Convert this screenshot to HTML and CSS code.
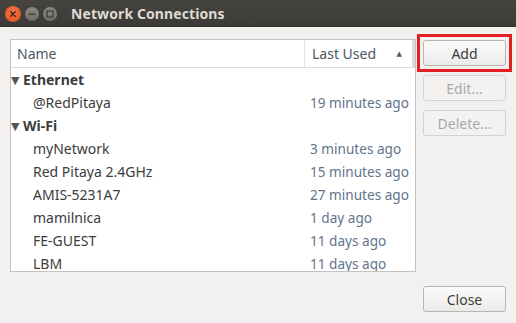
FILE: index.html
```html
<!DOCTYPE html>
<html lang="en">
<head>
    <meta charset="UTF-8">
    <title>Network Connections</title>
    <link rel="stylesheet" href="styles.css">
</head>
<body>

<div class="window">
    <div class="titlebar">
        <div class="controls">
            <span class="ctl close">
                <svg width="16" height="16" viewBox="0 0 16 16"><path d="M5.8 5.8 L10.2 10.2 M10.2 5.8 L5.8 10.2" stroke="#3a1a10" stroke-width="1.3" stroke-linecap="round"/></svg>
            </span>
            <span class="ctl small">
                <svg width="14" height="14" viewBox="0 0 14 14"><path d="M3.5 7 H10.5" stroke="#3c3b37" stroke-width="1.3"/></svg>
            </span>
            <span class="ctl small">
                <svg width="14" height="14" viewBox="0 0 14 14"><rect x="4" y="4" width="6" height="6" fill="none" stroke="#3c3b37" stroke-width="1.2"/></svg>
            </span>
        </div>
        <div class="title">Network Connections</div>
    </div>

    <div class="content">
        <div class="main">
            <div class="list">
                <div class="list-header">
                    <div class="col-name">Name</div>
                    <div class="col-used">Last Used <span class="sort">&#9650;</span></div>
                </div>
                <div class="rows">
                    <div class="row group"><span class="expander">&#9660;</span>Ethernet</div>
                    <div class="row"><span class="name">@RedPitaya</span><span class="used">19 minutes ago</span></div>
                    <div class="row group"><span class="expander">&#9660;</span>Wi-Fi</div>
                    <div class="row"><span class="name">myNetwork</span><span class="used">3 minutes ago</span></div>
                    <div class="row"><span class="name">Red Pitaya 2.4GHz</span><span class="used">15 minutes ago</span></div>
                    <div class="row"><span class="name">AMIS-5231A7</span><span class="used">27 minutes ago</span></div>
                    <div class="row"><span class="name">mamilnica</span><span class="used">1 day ago</span></div>
                    <div class="row"><span class="name">FE-GUEST</span><span class="used">11 days ago</span></div>
                    <div class="row"><span class="name">LBM</span><span class="used">11 days ago</span></div>
                </div>
            </div>

            <div class="actions">
                <div class="highlight">
                    <button class="button">Add</button>
                </div>
                <button class="button" disabled>Edit...</button>
                <button class="button" disabled>Delete...</button>
            </div>
        </div>

        <div class="footer">
            <button class="button">Close</button>
        </div>
    </div>
</div>

</body>
</html>
```

FILE: styles.css
```css
html, body {
    margin: 0;
    padding: 0;
}

body {
    width: 516px;
    height: 323px;
    overflow: hidden;
    font-family: "Noto Sans", "DejaVu Sans", sans-serif;
    font-size: 14px;
    background-color: #f2f1f0;
}

.window {
    display: flex;
    flex-direction: column;
    height: 100%;
}

.titlebar {
    height: 27px;
    flex: none;
    display: flex;
    align-items: center;
    background: linear-gradient(#45443f, #3b3a36);
    box-shadow: inset 0 -1px 0 #2e2d2a;
}

.controls {
    display: flex;
    align-items: center;
    gap: 4px;
    margin-left: 5px;
}

.ctl {
    width: 16px;
    height: 16px;
    border-radius: 50%;
    background: linear-gradient(#8a8984, #6f6e6a);
    display: flex;
}

.ctl.small {
    width: 14px;
    height: 14px;
}

.ctl.close {
    background: radial-gradient(circle at 50% 40%, #f5794d, #de4a16);
}

.title {
    margin-left: 14px;
    color: #dfdbd2;
    font-weight: bold;
    font-size: 14px;
    letter-spacing: 0.1px;
}

.content {
    flex: 1;
    display: flex;
    flex-direction: column;
    padding: 12px 10px 11px 10px;
}

.main {
    display: flex;
    height: 233px;
}

.list {
    width: 404px;
    border: 1px solid #c4c3c0;
    background: #fff;
    overflow: hidden;
    display: flex;
    flex-direction: column;
}

.list-header {
    height: 27px;
    flex: none;
    display: flex;
    align-items: center;
    border-bottom: 1px solid #dcdcdc;
    color: #4c5866;
}

.col-name {
    width: 287px;
    padding-left: 6px;
    align-self: stretch;
    display: flex;
    align-items: center;
    border-right: 1px solid #e2e2e2;
}

.col-used {
    flex: 1;
    padding-left: 7px;
    display: flex;
    align-items: center;
    border-right: 3px solid #dadada;
    align-self: stretch;
}

.sort {
    font-size: 7px;
    color: #555;
    margin-left: auto;
    margin-right: 10px;
}

.row {
    height: 23px;
    display: flex;
    align-items: center;
    color: #3c3c3c;
}

.row.group {
    font-weight: bold;
}

.expander {
    font-size: 11px;
    color: #555;
    width: 12px;
}

.name {
    width: 277px;
    padding-left: 22px;
}

.used {
    color: #61748c;
    font-size: 13.6px;
}

.actions {
    display: flex;
    flex-direction: column;
    gap: 9px;
    margin-left: 7px;
    padding-top: 1px;
}

.highlight {
    border: 3px solid #e31e24;
    padding: 3px;
    margin: -6px;
    display: flex;
}

.button {
    width: 83px;
    height: 26px;
    font-family: inherit;
    font-size: 14px;
    color: #3c3c3c;
    background: linear-gradient(#fbfbfa, #ecebe9);
    border: 1px solid #b6b5b2;
    border-radius: 3px;
    padding: 0;
}

.button:disabled {
    color: #a9a9a9;
    background: #f3f2f1;
    border-color: #d3d2cf;
}

.footer {
    margin-top: auto;
    display: flex;
    justify-content: flex-end;
}
```
